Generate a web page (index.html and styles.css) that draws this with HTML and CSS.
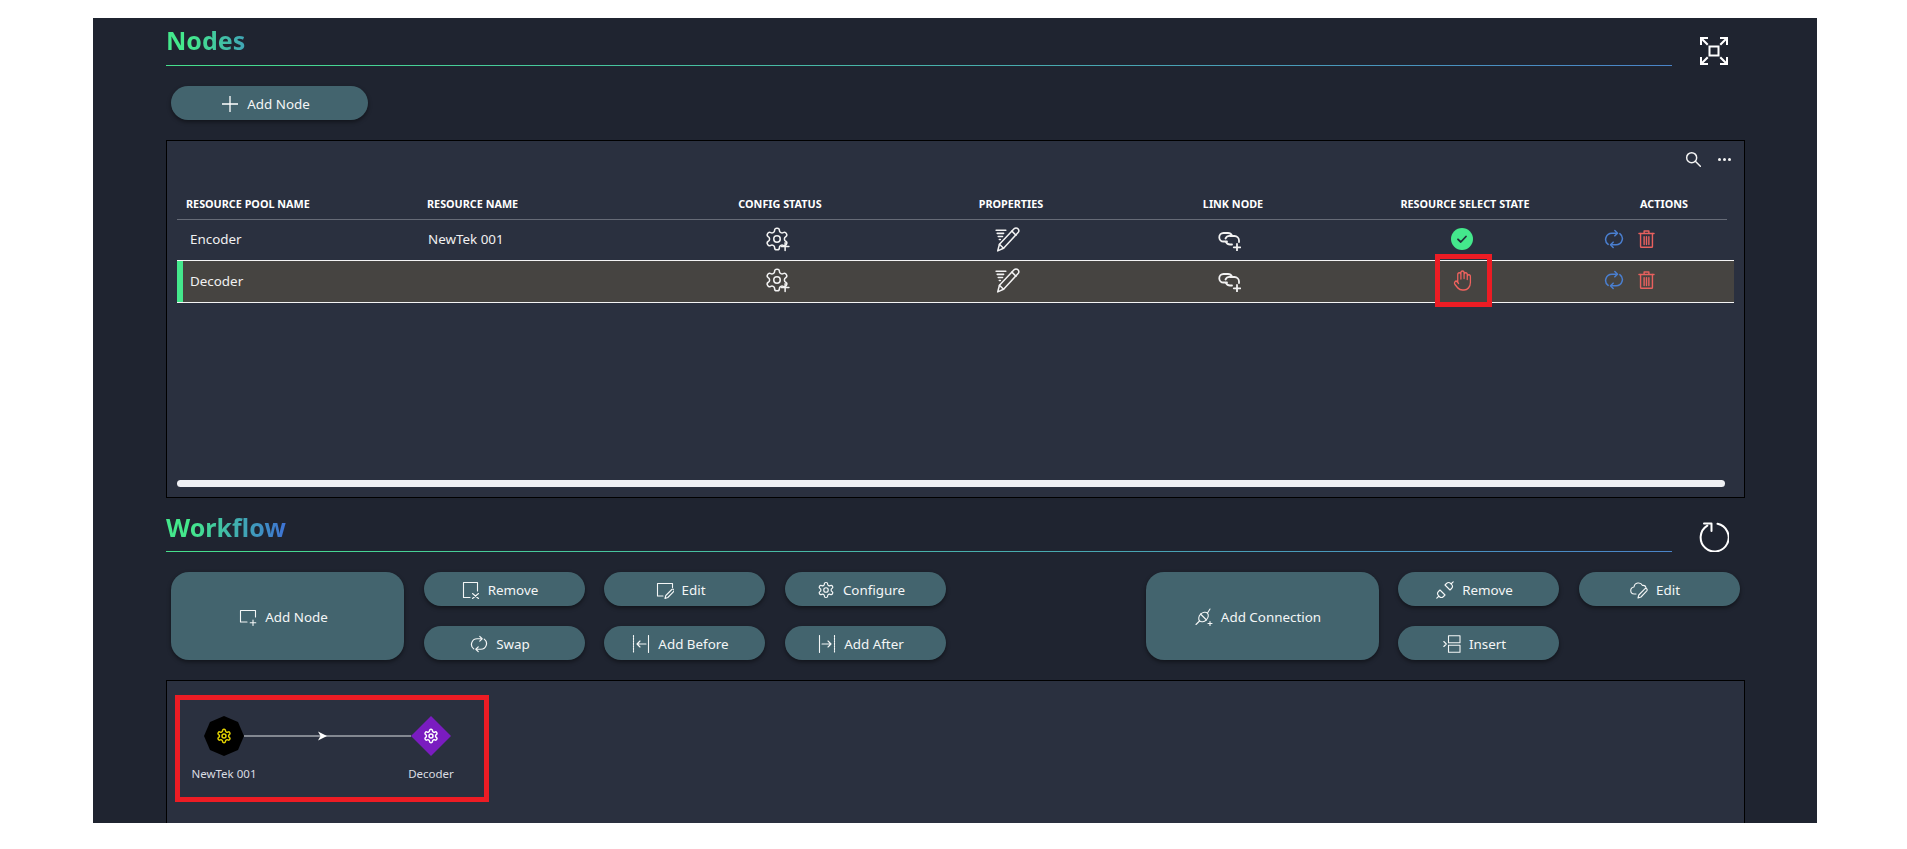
FILE: index.html
```html
<!DOCTYPE html>
<html lang="en">
<head>
    <meta charset="UTF-8">
    <title>Nodes and Workflow</title>
    <link rel="stylesheet" href="styles.css">
</head>
<body>
    <svg class="sprites" xmlns="http://www.w3.org/2000/svg">
        <defs>
            <symbol id="gear" viewBox="0 0 24 24">
                <path d="M12.22 2h-.44a2 2 0 0 0-2 2v.18a2 2 0 0 1-1 1.73l-.43.25a2 2 0 0 1-2 0l-.15-.08a2 2 0 0 0-2.73.73l-.22.38a2 2 0 0 0 .73 2.73l.15.1a2 2 0 0 1 1 1.72v.51a2 2 0 0 1-1 1.74l-.15.09a2 2 0 0 0-.73 2.73l.22.38a2 2 0 0 0 2.73.73l.15-.08a2 2 0 0 1 2 0l.43.25a2 2 0 0 1 1 1.73V20a2 2 0 0 0 2 2h.44a2 2 0 0 0 2-2v-.18a2 2 0 0 1 1-1.73l.43-.25a2 2 0 0 1 2 0l.15.08a2 2 0 0 0 2.73-.73l.22-.39a2 2 0 0 0-.73-2.73l-.15-.08a2 2 0 0 1-1-1.74v-.5a2 2 0 0 1 1-1.74l.15-.09a2 2 0 0 0 .73-2.73l-.22-.38a2 2 0 0 0-2.73-.73l-.15.08a2 2 0 0 1-2 0l-.43-.25a2 2 0 0 1-1-1.73V4a2 2 0 0 0-2-2z"/>
                <circle cx="12" cy="12" r="3"/>
            </symbol>
            <mask id="gear-cut">
                <rect width="24" height="24" fill="#fff"/>
                <rect x="15" y="15" width="9" height="9" fill="#000"/>
            </mask>
            <symbol id="gear-plus" viewBox="0 0 24 24">
                <g mask="url(#gear-cut)"><use href="#gear" width="24" height="24"/></g>
                <path d="M19.500 15.500v7M16 19h7"/>
            </symbol>
            <symbol id="pencil-list" viewBox="0 0 24 24">
                <path d="M1 4h9M2 6.800h6M3 9.600h4M4 12.400h1"/>
                <path d="M2.500 23l1.600-6.200L17.600 2.600c1-1 2.700-1 3.600 0s1.100 2.400.1 3.500L7.900 20.600z"/>
                <path d="M4.100 16.800l3.800 3.800M15.600 4.700l3.800 3.800"/>
            </symbol>
            <symbol id="link-plus" viewBox="0 0 24 24">
                <path d="M10 14.500H6.500a4.250 4.250 0 0 1 0-8.500H11a4.500 4.500 0 0 1 4 2.500"/>
                <path d="M8.500 11.500A4.500 4.500 0 0 1 13 9h4.500a4.500 4.500 0 0 1 4.500 4.500V15M15 17.500h-2a4.500 4.500 0 0 1-4-2.500"/>
                <path d="M20 17v6.500M16.800 20.300h6.500"/>
            </symbol>
            <symbol id="hand" viewBox="0 0 24 24" preserveAspectRatio="none">
                <path d="M18 11V6a2 2 0 0 0-2-2 2 2 0 0 0-2 2M14 10V4a2 2 0 0 0-2-2 2 2 0 0 0-2 2v2M10 10.500V6a2 2 0 0 0-2-2 2 2 0 0 0-2 2v8M18 8a2 2 0 1 1 4 0v6a8 8 0 0 1-8 8h-2c-2.800 0-4.500-.860-5.990-2.340l-3.600-3.600a2 2 0 0 1 2.830-2.820L7 15"/>
            </symbol>
            <symbol id="sync" viewBox="0 0 24 24">
                <path d="M15 5H9.500a7.500 7.500 0 0 0-4.500 13.500"/>
                <path d="M9 19h5.500a7.500 7.500 0 0 0 4.500-13.500"/>
                <path d="M13 1.800L16.200 5 13 8.200M11 22.200L7.800 19l3.200-3.200"/>
            </symbol>
            <symbol id="trash" viewBox="0 0 24 24">
                <path d="M2.500 5h19M9 5V2h6v3"/>
                <path d="M4.500 5v16.500a1 1 0 0 0 1 1h13a1 1 0 0 0 1-1V5"/>
                <path d="M9 9v10M12 9v10M15 9v10"/>
            </symbol>
            <symbol id="search" viewBox="0 0 24 24">
                <circle cx="10" cy="10" r="7.500"/>
                <path d="M15.500 15.500L23 23"/>
            </symbol>
            <symbol id="fullscreen" viewBox="0 0 30 30">
                <rect x="10.500" y="10.500" width="9" height="9" fill="none" stroke="#fff" stroke-width="2"/>
                <path d="M1 9V1h8v2H4.500L9.500 8 8 9.500 3 4.500V9zM29 9V1h-8v2h4.500l-5 5 1.500 1.500 5-5V9zM1 21v8h8v-2H4.500l5-5L8 20.500l-5 5V21zM29 21v8h-8v-2h4.500l-5-5 1.500-1.500 5 5V21z"/>
            </symbol>
            <symbol id="restart" viewBox="0 0 30 30">
                <path d="M18.500 1.800A14 14 0 1 1 8.300 3.600"/>
                <path d="M5 1.500h7.500V9"/>
            </symbol>
            <symbol id="node-add" viewBox="0 0 18 18">
                <path d="M8 14H1.500V2.500h15V9"/>
                <path d="M14 12v5.500M11.200 14.800h5.600"/>
            </symbol>
            <symbol id="node-remove" viewBox="0 0 18 18">
                <path d="M8 16.500H1.500v-15h14V10"/>
                <path d="M10.500 12.500l6 5M16.500 12.500l-6 5"/>
            </symbol>
            <symbol id="node-edit" viewBox="0 0 18 18">
                <path d="M7 15H1.500V2.500h15v4"/>
                <path d="M9 17.500l.8-3 6-6c.6-.6 1.500-.6 2 0s.5 1.400 0 2l-6 6z"/>
            </symbol>
            <symbol id="add-before" viewBox="0 0 18 18">
                <path d="M1.500 .5v17" stroke-dasharray="1.500 1"/>
                <path d="M16.500 .5v17M14 9H5M8 6L5 9l3 3"/>
            </symbol>
            <symbol id="add-after" viewBox="0 0 18 18">
                <path d="M16.500 .5v17" stroke-dasharray="1.500 1"/>
                <path d="M1.500 .5v17M4 9h9M10 6l3 3-3 3"/>
            </symbol>
            <symbol id="plug" viewBox="0 0 18 18">
                <ellipse cx="8.500" cy="9" rx="5.500" ry="4" transform="rotate(-45 8.500 9)"/>
                <path d="M5.500 6l6 6M12.500 5L15 1M4.500 13l-3.500 3.500"/>
                <path d="M15 13.500v4M13 15.500h4"/>
            </symbol>
            <symbol id="plug-remove" viewBox="0 0 18 18">
                <path d="M4 9l5 5-1.500 1.500a3 3 0 0 1-4.200 0l-.8-.8a3 3 0 0 1 0-4.200zM2.500 15.500L.8 17.200"/>
                <path d="M9 4l5 5 1.500-1.500a3 3 0 0 0 0-4.200l-.8-.8a3 3 0 0 0-4.200 0zM15.500 2.500l1.700-1.700"/>
            </symbol>
            <symbol id="cloud-edit" viewBox="0 0 18 18">
                <path d="M6 13H4.500a3.500 3.500 0 0 1-.5-7A4.500 4.500 0 0 1 12.500 4.500 3 3 0 0 1 16 6.500"/>
                <path d="M8 17l.8-3 6-6.200c.6-.6 1.500-.6 2 0s.5 1.400 0 2L11 16z"/>
            </symbol>
            <symbol id="insert" viewBox="0 0 18 18">
                <rect x="5.500" y=".8" width="11.500" height="7"/>
                <rect x="5.500" y="10.200" width="11.500" height="7"/>
                <path d="M.8 6.500L3.300 9 .8 11.500"/>
            </symbol>
        </defs>
    </svg>

    <div class="screen">
        <div class="section-head nodes-head">
            <h2 class="section-title"><span>Nodes</span></h2>
            <div class="head-tool">
                <svg class="icon-solid fullscreen"><use href="#fullscreen"/></svg>
            </div>
        </div>

        <div class="nodes-add">
            <button class="btn">
                <svg class="plus-icon" viewBox="0 0 18 18"><path d="M9 1v16M1 9h16"/></svg>
                Add Node
            </button>
        </div>

        <div class="panel nodes-panel">
            <div class="panel-tools">
                <svg class="icon search"><use href="#search"/></svg>
                <div class="dots"><i></i><i></i><i></i></div>
            </div>
            <div class="grid grid-head">
                <div class="cell-name">Resource Pool Name</div>
                <div class="cell-res">Resource Name</div>
                <div class="cell-center">Config Status</div>
                <div class="cell-center">Properties</div>
                <div class="cell-center">Link Node</div>
                <div class="cell-center">Resource Select State</div>
                <div class="cell-center cell-actions-head">Actions</div>
            </div>
            <div class="grid grid-row">
                <div class="cell-name">Encoder</div>
                <div class="cell-res">NewTek 001</div>
                <div class="cell-icon"><svg class="icon cell-svg"><use href="#gear-plus"/></svg></div>
                <div class="cell-icon"><svg class="icon cell-svg"><use href="#pencil-list"/></svg></div>
                <div class="cell-icon"><svg class="icon cell-svg link-svg"><use href="#link-plus"/></svg></div>
                <div class="cell-icon">
                    <svg class="state-ok" viewBox="0 0 22 22"><circle cx="11" cy="11" r="11"/><path d="M7 11.300l2.800 2.700L15 8.500"/></svg>
                </div>
                <div class="cell-actions">
                    <svg class="icon act-sync"><use href="#sync"/></svg>
                    <svg class="icon act-trash"><use href="#trash"/></svg>
                </div>
            </div>
            <div class="grid grid-row row-selected">
                <div class="cell-name">Decoder</div>
                <div class="cell-res"></div>
                <div class="cell-icon"><svg class="icon cell-svg"><use href="#gear-plus"/></svg></div>
                <div class="cell-icon"><svg class="icon cell-svg"><use href="#pencil-list"/></svg></div>
                <div class="cell-icon"><svg class="icon cell-svg link-svg"><use href="#link-plus"/></svg></div>
                <div class="cell-icon cell-marked">
                    <svg class="icon state-hand"><use href="#hand"/></svg>
                    <div class="red-mark"></div>
                </div>
                <div class="cell-actions">
                    <svg class="icon act-sync"><use href="#sync"/></svg>
                    <svg class="icon act-trash"><use href="#trash"/></svg>
                </div>
            </div>
            <div class="scrollbar"></div>
        </div>

        <div class="section-head workflow-head">
            <h2 class="section-title"><span>Workflow</span></h2>
            <div class="head-tool">
                <svg class="icon restart"><use href="#restart"/></svg>
            </div>
        </div>

        <div class="wf-actions">
            <div class="wf-group wf-nodes">
                <button class="btn btn-big"><svg class="icon btn-icon"><use href="#node-add"/></svg>Add Node</button>
                <button class="btn"><svg class="icon btn-icon"><use href="#node-remove"/></svg>Remove</button>
                <button class="btn"><svg class="icon btn-icon"><use href="#node-edit"/></svg>Edit</button>
                <button class="btn"><svg class="icon btn-icon btn-icon-24"><use href="#gear"/></svg>Configure</button>
                <button class="btn"><svg class="icon btn-icon btn-icon-24"><use href="#sync"/></svg>Swap</button>
                <button class="btn"><svg class="icon btn-icon"><use href="#add-before"/></svg>Add Before</button>
                <button class="btn"><svg class="icon btn-icon"><use href="#add-after"/></svg>Add After</button>
            </div>
            <div class="wf-group wf-links">
                <button class="btn btn-big"><svg class="icon btn-icon"><use href="#plug"/></svg>Add Connection</button>
                <button class="btn"><svg class="icon btn-icon"><use href="#plug-remove"/></svg>Remove</button>
                <button class="btn"><svg class="icon btn-icon"><use href="#cloud-edit"/></svg>Edit</button>
                <button class="btn btn-insert"><svg class="icon btn-icon"><use href="#insert"/></svg>Insert</button>
            </div>
        </div>

        <div class="panel graph-panel">
            <div class="graph-mark">
                <svg class="graph" viewBox="0 0 304 97">
                    <path class="graph-line" d="M64 36H231"/>
                    <path class="graph-arrow" d="M138 31.500L147 36l-9 4.500 2.500-4.500z"/>
                    <polygon class="node-octagon" points="44,16 58,22 64,36 58,50 44,56 30,50 24,36 30,22"/>
                    <use class="node-gear-y" href="#gear" x="36" y="28" width="16" height="16"/>
                    <polygon class="node-diamond" points="251,16 271,36 251,56 231,36"/>
                    <use class="node-gear-w" href="#gear" x="243" y="28" width="16" height="16"/>
                    <text class="graph-label" x="44" y="78">NewTek 001</text>
                    <text class="graph-label" x="251" y="78">Decoder</text>
                </svg>
            </div>
        </div>
    </div>
</body>
</html>
```

FILE: styles.css
```css
* {
    margin: 0;
    padding: 0;
    box-sizing: border-box;
}
html, body {
    height: 100%;
    background: #fff;
    overflow: hidden;
}
body {
    padding: 18px 90px 0 93px;
    font-family: "Noto Sans", "Open Sans", sans-serif;
    font-size: 13.4px;
    color: #f1f1f1;
}
.sprites {
    display: none;
}
.screen {
    height: 805px;
    padding-left: 73px;
    background: #1f2430;
    overflow: hidden;
}

/* icons */
.icon {
    fill: none;
    stroke: currentColor;
    stroke-width: 1.5;
    stroke-linecap: round;
    stroke-linejoin: round;
    overflow: visible;
}
.icon-solid {
    fill: #fff;
}

/* section title */
.section-head {
    display: flex;
    width: 1579px;
}
.nodes-head {
    height: 48px;
}
.section-title {
    width: 1506px;
    padding: 6px 0 9px;
    border-bottom: 1px solid;
    border-image: linear-gradient(90deg, #46e08c, #4a84c8) 1;
    font-size: 25px;
    line-height: 32px;
    font-weight: 700;
}
.section-title span {
    display: block;
    width: 122px;
    background: linear-gradient(90deg, #44e88c 20%, #3d6fd6 100%);
    -webkit-background-clip: text;
    background-clip: text;
    color: transparent;
}
.head-tool {
    flex: 1;
    display: flex;
    justify-content: center;
    padding: 18px 0 0 10px;
}
.fullscreen {
    width: 30px;
    height: 30px;
}
.workflow-head {
    margin-top: 13px;
}
.workflow-head .section-title {
    padding: 0 0 8px;
}
.workflow-head .head-tool {
    padding-top: 11px;
}
.restart {
    width: 30px;
    height: 30px;
    stroke-width: 2;
    color: #fff;
}

/* buttons */
.btn {
    display: flex;
    align-items: center;
    justify-content: center;
    gap: 8px;
    height: 34px;
    padding: 2px 8px 0 0;
    border: 0;
    border-radius: 17px;
    background: #43646e;
    box-shadow: 0 2px 4px rgba(0, 0, 0, .45);
    color: #f4f6f6;
    font: 13.4px "Noto Sans", "Open Sans", sans-serif;
}
.btn-icon {
    width: 18px;
    height: 18px;
    stroke-width: 1.100;
}
.btn-icon-24 {
    stroke-width: 1.600;
}
.plus-icon {
    width: 18px;
    height: 18px;
    fill: none;
    stroke: #fff;
    stroke-width: 1.300;
}
.nodes-add {
    padding: 20px 0 20px 5px;
}
.nodes-add .btn {
    width: 197px;
}

/* panels */
.panel {
    width: 1579px;
    background: #2a303f;
    border: 1px solid #000;
}
.nodes-panel {
    display: flex;
    flex-direction: column;
    height: 358px;
    padding: 0 0 10px 10px;
}
.panel-tools {
    display: flex;
    align-items: center;
    justify-content: flex-end;
    gap: 17px;
    height: 36px;
    padding-right: 13px;
}
.search {
    width: 16px;
    height: 16px;
    stroke-width: 2.200;
    color: #f4f4f4;
}
.dots {
    display: flex;
    gap: 2px;
}
.dots i {
    width: 3px;
    height: 3px;
    border-radius: 50%;
    background: #f4f4f4;
}

/* table */
.grid {
    display: grid;
    grid-template-columns: 240px 247px 232px 230px 214px 250px 144px;
    align-items: center;
}
.grid-head {
    width: 1550px;
    height: 43px;
    padding-top: 10px;
    border-bottom: 1px solid #666b77;
    font-size: 10.800px;
    font-weight: 700;
    color: #fff;
    text-transform: uppercase;
    white-space: nowrap;
}
.grid-head .cell-name {
    padding-left: 9px;
}
.grid-head .cell-res {
    padding-left: 10px;
}
.cell-center {
    text-align: center;
}
.cell-actions-head {
    padding-left: 4px;
}
.grid-row {
    width: 1557px;
    height: 40px;
}
.grid-row .cell-name {
    padding: 0 0 2px 13px;
}
.grid-row .cell-res {
    padding: 0 0 2px 11px;
}
.cell-icon {
    position: relative;
    display: flex;
    justify-content: center;
    padding: 0 6px 3px 0;
}
.cell-svg {
    width: 26px;
    height: 26px;
    stroke-width: 1.400;
    color: #f2f2f2;
}
.link-svg {
    width: 24px;
    height: 24px;
    margin-right: 3px;
    stroke-width: 1.800;
}
.row-selected {
    height: 43px;
    border-top: 1px solid #f4f4f4;
    border-bottom: 1px solid #f4f4f4;
    background: #464441;
    box-shadow: inset 6px 0 0 #44e88c;
}
.state-ok {
    width: 22px;
    height: 22px;
}
.state-ok circle {
    fill: #44e88c;
}
.state-ok path {
    fill: none;
    stroke: #20303a;
    stroke-width: 1.800;
    stroke-linecap: round;
    stroke-linejoin: round;
}
.state-hand {
    width: 19px;
    height: 23px;
    color: #f0625e;
    stroke-width: 1.600;
}
.cell-actions {
    display: flex;
    align-items: center;
    gap: 13px;
    padding: 0 0 3px 14px;
}
.act-sync {
    width: 20px;
    height: 20px;
    color: #4a7fd0;
    stroke-width: 1.800;
}
.act-trash {
    width: 19px;
    height: 20px;
    color: #e8605e;
    stroke-width: 1.800;
}
.red-mark {
    position: absolute;
    left: 95px;
    top: -15px;
    width: 57px;
    height: 53px;
    border: 5px solid #ed1c24;
}
.scrollbar {
    width: 1548px;
    height: 7px;
    margin-top: auto;
    border-radius: 4px;
    background: #eff0f4;
}

/* workflow buttons */
.wf-actions {
    display: flex;
    gap: 200px;
    padding: 20px 0 20px 5px;
}
.wf-group {
    display: grid;
    grid-template-rows: 34px 34px;
    row-gap: 20px;
    column-gap: 19.500px;
}
.wf-nodes {
    grid-template-columns: 233px 161px 161px 161px;
}
.wf-links {
    grid-template-columns: 233px 161px 161px;
}
.btn-big {
    grid-row: 1 / 3;
    height: 88px;
    border-radius: 18px;
}
.btn-insert {
    grid-column: 2;
}

/* graph */
.graph-panel {
    height: 200px;
    padding: 14px 0 0 8px;
}
.graph-mark {
    width: 314px;
    height: 107px;
    border: 5px solid #ed1c24;
}
.graph {
    display: block;
    width: 304px;
    height: 97px;
}
.graph-line {
    fill: none;
    stroke: #a2a6ae;
    stroke-width: 1.500;
}
.graph-arrow {
    fill: #fff;
}
.node-octagon {
    fill: #000;
}
.node-diamond {
    fill: #7a1cc0;
}
.node-gear-y {
    fill: none;
    stroke: #e3d200;
    stroke-width: 2.200;
}
.node-gear-w {
    fill: none;
    stroke: #fff;
    stroke-width: 2.200;
}
.graph-label {
    fill: #d9dce2;
    font-size: 11.500px;
    text-anchor: middle;
}
```
